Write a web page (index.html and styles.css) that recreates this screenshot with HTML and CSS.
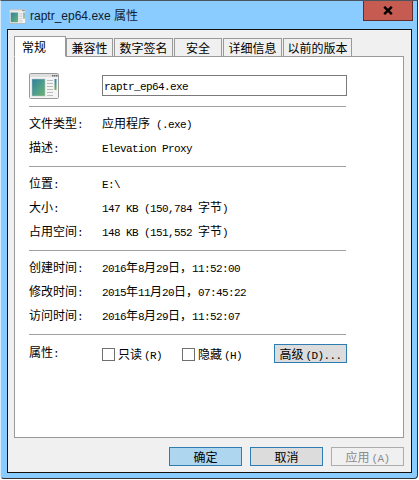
FILE: index.html
```html
<!DOCTYPE html>
<html lang="zh">
<head>
<meta charset="utf-8">
<title>raptr_ep64.exe 属性</title>
<link rel="stylesheet" href="styles.css">
</head>
<body>
<svg class="defs" width="0" height="0" aria-hidden="true">
  <defs>
    <linearGradient id="pic" x1="0" y1="0" x2="1" y2="1">
      <stop offset="0" stop-color="#2f7f9e"/>
      <stop offset="0.55" stop-color="#4f9f8a"/>
      <stop offset="1" stop-color="#6fb070"/>
    </linearGradient>
    <linearGradient id="bar" x1="0" y1="0" x2="0" y2="1">
      <stop offset="0" stop-color="#2f7fb0"/>
      <stop offset="1" stop-color="#6fb050"/>
    </linearGradient>
    <symbol id="appicon" viewBox="0 0 30 26">
      <rect x="0.5" y="0.5" width="29" height="25" rx="1" fill="#f4f4f4" stroke="#9a9a9a"/>
      <rect x="1" y="1" width="28" height="3" fill="#dedede"/>
      <rect x="23" y="2" width="1.5" height="1.5" fill="#666"/>
      <rect x="25" y="2" width="1.5" height="1.5" fill="#666"/>
      <rect x="27" y="2" width="1.5" height="1.5" fill="#666"/>
      <rect x="3" y="6" width="13" height="17" fill="url(#pic)" stroke="#b8c4c8" stroke-width="0.5"/>
      <rect x="18" y="7" width="6" height="1" fill="#bbb"/>
      <rect x="18" y="10" width="6" height="1" fill="#bbb"/>
      <rect x="18" y="13" width="6" height="1" fill="#bbb"/>
      <rect x="18" y="16" width="6" height="1" fill="#bbb"/>
      <rect x="18" y="19" width="6" height="1" fill="#bbb"/>
      <rect x="18" y="22" width="6" height="1" fill="#bbb"/>
      <rect x="25.5" y="6" width="2" height="11" fill="url(#bar)"/>
    </symbol>
  </defs>
</svg>
<div class="window">
  <header class="titlebar">
    <svg class="title-icon" aria-hidden="true"><use href="#appicon"/></svg>
    <span class="title-text">raptr_ep64.exe 属性</span>
    <div class="close">
      <svg width="10" height="9" viewBox="0 0 10 9" aria-hidden="true"><path d="M1.2 0.8 L8.8 8.2 M8.8 0.8 L1.2 8.2" stroke="#000" stroke-width="2.4" fill="none"/></svg>
    </div>
  </header>
  <main class="client">
    <nav class="tabs">
      <div class="tab active t1">常规</div>
      <div class="tab t2">兼容性</div>
      <div class="tab t3">数字签名</div>
      <div class="tab t4">安全</div>
      <div class="tab t5">详细信息</div>
      <div class="tab t6">以前的版本</div>
    </nav>
    <section class="panel">
      <div class="file-head">
        <svg class="file-icon" aria-hidden="true"><use href="#appicon"/></svg>
        <div class="name-box"><span class="l">raptr_ep64.exe</span></div>
      </div>
      <div class="group">
        <div class="row"><span class="key">文件类型<span class="l">:</span></span><span class="val">应用程序<span class="l"> (.exe)</span></span></div>
        <div class="row"><span class="key">描述<span class="l">:</span></span><span class="val"><span class="l">Elevation Proxy</span></span></div>
      </div>
      <div class="group">
        <div class="row"><span class="key">位置<span class="l">:</span></span><span class="val"><span class="l">E:\</span></span></div>
        <div class="row"><span class="key">大小<span class="l">:</span></span><span class="val"><span class="l">147 KB (150,784 </span>字节<span class="l">)</span></span></div>
        <div class="row"><span class="key">占用空间<span class="l">:</span></span><span class="val"><span class="l">148 KB (151,552 </span>字节<span class="l">)</span></span></div>
      </div>
      <div class="group">
        <div class="row"><span class="key">创建时间<span class="l">:</span></span><span class="val"><span class="l">2016</span>年<span class="l">8</span>月<span class="l">29</span>日，<span class="l">11:52:00</span></span></div>
        <div class="row"><span class="key">修改时间<span class="l">:</span></span><span class="val"><span class="l">2015</span>年<span class="l">11</span>月<span class="l">20</span>日，<span class="l">07:45:22</span></span></div>
        <div class="row"><span class="key">访问时间<span class="l">:</span></span><span class="val"><span class="l">2016</span>年<span class="l">8</span>月<span class="l">29</span>日，<span class="l">11:52:07</span></span></div>
      </div>
      <div class="group attrs">
        <div class="row">
          <span class="key">属性<span class="l">:</span></span>
          <div class="checks">
            <label class="check c1"><span class="box"></span><span>只读<span class="l hot">(R)</span></span></label>
            <label class="check c2"><span class="box"></span><span>隐藏<span class="l hot">(H)</span></span></label>
            <div class="btn adv">高级<span class="l hot">(D)...</span></div>
          </div>
        </div>
      </div>
    </section>
    <footer class="actions">
      <div class="btn primary">确定</div>
      <div class="btn">取消</div>
      <div class="btn disabled">应用<span class="l hot">(A)</span></div>
    </footer>
  </main>
</div>
</body>
</html>
```

FILE: styles.css
```css
* { box-sizing: border-box; }
html, body { margin: 0; padding: 0; }
body {
  width: 419px;
  height: 480px;
  overflow: hidden;
  background: #fff;
  font-family: "Noto Sans CJK SC", "Liberation Sans", sans-serif;
  font-size: 12px;
  line-height: 16px;
  color: #000;
}
.defs { position: absolute; }
.l {
  font-family: "Liberation Mono", monospace;
  font-size: 11px;
  letter-spacing: -0.6px;
  white-space: pre;
}
.hot { margin-left: 2px; }

.window {
  width: 418px;
  height: 479px;
  background: #8accff;
  border: 1px solid #333;
  border-left-color: #d4eafb;
  border-top-color: #4a5560;
  border-radius: 0 0 4px 4px;
  display: flex;
  flex-direction: column;
  padding: 0 5px 5px 6px;
}
.titlebar {
  height: 28px;
  flex: none;
  display: flex;
  align-items: flex-start;
}
.title-icon { width: 17px; height: 15px; margin: 8px 0 0 2px; }
.title-text {
  margin: 6px 0 0 4px;
  font-family: "Liberation Sans", "Noto Sans CJK SC", sans-serif;
  font-size: 12px;
  line-height: 18px;
  color: #102030;
}
.close {
  margin-left: auto;
  margin-right: -1px;
  width: 50px;
  height: 20px;
  background: #c65c51;
  border: 1px solid #5c2f2c;
  border-top: 0;
  display: flex;
  align-items: center;
  justify-content: center;
}

.client {
  flex: 1;
  background: #f0f0f0;
  border: 1px solid #111;
  padding: 6px 8px 0 6px;
  display: flex;
  flex-direction: column;
}
.tabs {
  height: 21px;
  flex: none;
  display: flex;
  align-items: flex-end;
  margin-bottom: -1px;
  position: relative;
}
.tab {
  height: 19px;
  border: 1px solid #999;
  background: #f0f0f0;
  text-align: center;
  line-height: 17px;
  margin-right: 1px;
}
.tab.active {
  height: 21px;
  background: #fff;
  border-bottom-color: #fff;
  line-height: 19px;
  margin-right: 0;
  text-align: left;
  padding-left: 7px;
}
.t1 { width: 52px; }
.t2 { width: 47px; }
.t3 { width: 59px; }
.t4 { width: 48px; }
.t5 { width: 59px; }
.t6 { width: 69px; margin-right: 0; }

.panel {
  width: 390px;
  height: 382px;
  flex: none;
  background: #fff;
  border: 1px solid #999;
  padding: 0 56px 0 14px;
  display: flex;
  flex-direction: column;
}
.file-head {
  height: 49px;
  flex: none;
  display: flex;
  align-items: center;
  padding-top: 8px;
}
.file-icon { width: 30px; height: 26px; margin-right: 43px; flex: none; }
.name-box {
  width: 245px;
  height: 21px;
  margin-right: -1px;
  border: 1px solid #7a7a7a;
  padding-left: 1px;
  line-height: 17px;
}
.group {
  border-top: 1px solid #a0a0a0;
  padding: 5px 0 6px;
  width: 317px;
}
.attrs { padding-top: 6px; }
.row {
  height: 24px;
  display: flex;
  align-items: center;
}
.key { width: 73px; flex: none; }
.val { white-space: pre; }
.checks {
  display: flex;
  align-items: center;
  flex: 1;
}
.check { display: flex; align-items: center; margin-top: 3px; }
.c1 { width: 80px; }
.c2 { width: 92px; }
.box {
  width: 13px;
  height: 13px;
  border: 1px solid #707070;
  background: #fff;
  margin-right: 3px;
  flex: none;
}
.btn {
  width: 73px;
  height: 19px;
  border: 1px solid #2d7db3;
  background: #dcdcdc;
  text-align: center;
  line-height: 17px;
}
.adv { margin-right: -1px; }
.actions {
  flex: 1;
  display: flex;
  justify-content: flex-end;
  align-items: flex-start;
  gap: 8px;
  padding: 9px 0 0;
  width: 390px;
}
.primary { background: #aed6ef; }
.disabled {
  background: #f0f0f0;
  border-color: #adadad;
  color: #8a8a8a;
}
```
